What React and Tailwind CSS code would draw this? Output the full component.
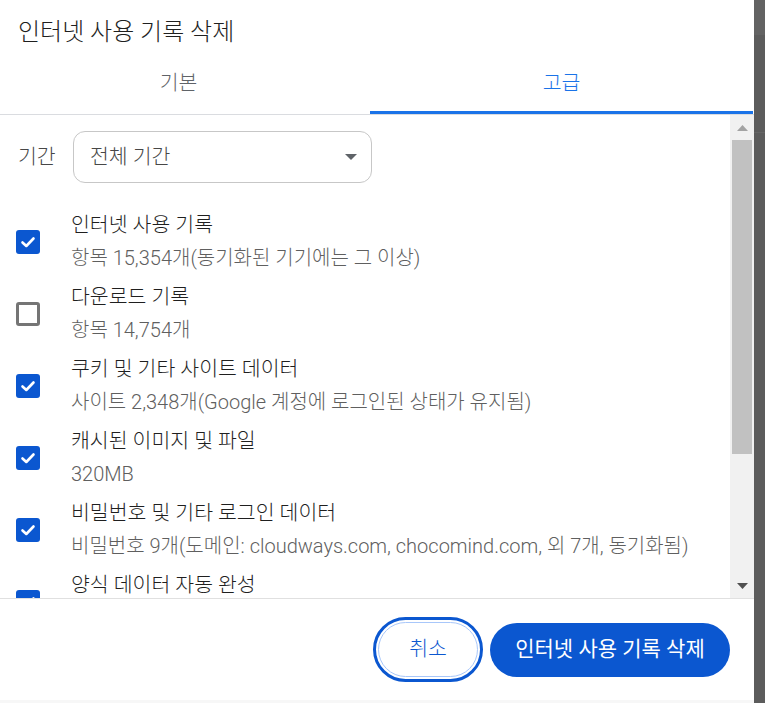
import { useState } from 'react';

const items = [
  { title: '인터넷 사용 기록', sub: '항목 15,354개(동기화된 기기에는 그 이상)', checked: true },
  { title: '다운로드 기록', sub: '항목 14,754개', checked: false },
  { title: '쿠키 및 기타 사이트 데이터', sub: '사이트 2,348개(Google 계정에 로그인된 상태가 유지됨)', checked: true },
  { title: '캐시된 이미지 및 파일', sub: '320MB', checked: true },
  { title: '비밀번호 및 기타 로그인 데이터', sub: '비밀번호 9개(도메인: cloudways.com, chocomind.com, 외 7개, 동기화됨)', checked: true },
  { title: '양식 데이터 자동 완성', sub: '\u00a0', checked: true },
];

const Checkbox = ({ checked }) =>
  checked ? (
    <div className="w-[24px] h-[24px] rounded-[3px] bg-[#0b57d0] flex items-center justify-center shrink-0">
      <svg width="24" height="24" viewBox="0 0 24 24" fill="none">
        <path d="M6.5 12.5 L10.3 16 L17.5 8.5" stroke="white" strokeWidth="2.6" strokeLinecap="round" strokeLinejoin="round" />
      </svg>
    </div>
  ) : (
    <div className="w-[24px] h-[24px] rounded-[3px] border-[3px] border-[#757575] bg-white shrink-0" />
  );

export default function App() {
  const [tab] = useState(1);

  return (
    <div
      className="flex w-[765px] h-[703px] overflow-hidden bg-[#f7f7f7] font-light"
      style={{ fontFamily: 'Roboto, "Noto Sans CJK KR", sans-serif' }}
    >
      {/* Dialog */}
      <div className="w-[754px] flex flex-col">
        <div className="h-[700px] bg-white flex flex-col">
          {/* Title */}
          <div className="h-[55px] pt-[17px] pl-[18px] text-[24px] leading-[30px] text-[#1f1f1f]">
            인터넷 사용 기록 삭제
          </div>

          {/* Tabs */}
          <div className="flex h-[59px]">
            <div className="w-[357px] flex flex-col">
              <div className="flex-1 flex items-center justify-center text-[20.5px] text-[#5f6368]">기본</div>
              <div className={tab === 0 ? 'h-[3px] bg-[#1a73e8]' : 'h-[3px]'} />
            </div>
            <div className="w-[13px]" />
            <div className="w-[383px] flex flex-col">
              <div className="flex-1 flex items-center justify-center text-[20.5px] text-[#1a73e8]">고급</div>
              <div className={tab === 1 ? 'h-[3px] bg-[#1a73e8]' : 'h-[3px]'} />
            </div>
          </div>
          <div className="h-px bg-[#dadce0]" />

          {/* Scroll area */}
          <div className="flex h-[483px]">
            <div className="flex-1 overflow-hidden pt-[16px]">
              <div className="flex items-center pl-[18px]">
                <span className="w-[55px] text-[20.5px] text-[#474747]">기간</span>
                <div className="w-[299px] h-[52px] rounded-[12px] border border-[#c7c7c7] flex items-center justify-between pl-[16px] pr-[14px]">
                  <span className="text-[20.5px] text-[#474747]">전체 기간</span>
                  <svg width="12" height="6" viewBox="0 0 12 6">
                    <path d="M0 0 L12 0 L6 6 Z" fill="#5f6368" />
                  </svg>
                </div>
              </div>

              <div className="mt-[26px] flex flex-col gap-[6px]">
                {items.map((it) => (
                  <div key={it.title} className="flex items-center h-[66px] pl-[16px] shrink-0">
                    <Checkbox checked={it.checked} />
                    <div className="ml-[31px] flex flex-col">
                      <span className="text-[20.5px] leading-[33px] text-[#1f1f1f] whitespace-nowrap">{it.title}</span>
                      <span className="text-[20px] leading-[33px] text-[#5f5f5f] whitespace-nowrap">{it.sub}</span>
                    </div>
                  </div>
                ))}
              </div>
            </div>

            {/* Scrollbar */}
            <div className="w-[24px] bg-[#f1f1f1] flex flex-col">
              <div className="h-[25px] flex items-center justify-center">
                <svg width="11" height="6" viewBox="0 0 11 6">
                  <path d="M0 6 L11 6 L5.5 0 Z" fill="#a3a3a3" />
                </svg>
              </div>
              <div className="flex-1 flex flex-col px-[2px]">
                <div className="h-[314px] bg-[#c1c1c1]" />
              </div>
              <div className="h-[25px] flex items-center justify-center">
                <svg width="11" height="6" viewBox="0 0 11 6">
                  <path d="M0 0 L11 0 L5.5 6 Z" fill="#505050" />
                </svg>
              </div>
            </div>
          </div>

          {/* Footer */}
          <div className="h-px bg-[#e0e0e0]" />
          <div className="flex-1 flex items-center justify-end pr-[24px] gap-[12px]">
            <button className="h-[55px] w-[100px] rounded-full border border-[#a8c7fa] bg-white text-[20.5px] text-[#0b57d0] outline-[3px] outline-solid outline-[#0b57d0] outline-offset-[2px]">
              취소
            </button>
            <button className="h-[54px] w-[240px] rounded-full bg-[#0b57d0] text-[21px] font-normal text-white">
              인터넷 사용 기록 삭제
            </button>
          </div>
        </div>
      </div>

      {/* Right backdrop strip */}
      <div className="flex-1 flex flex-col bg-[#5c5c5c]">
        <div className="h-[35px] bg-[#636363]" />
        <div className="h-[98px] border-b border-[#666666]" />
      </div>
    </div>
  );
}
